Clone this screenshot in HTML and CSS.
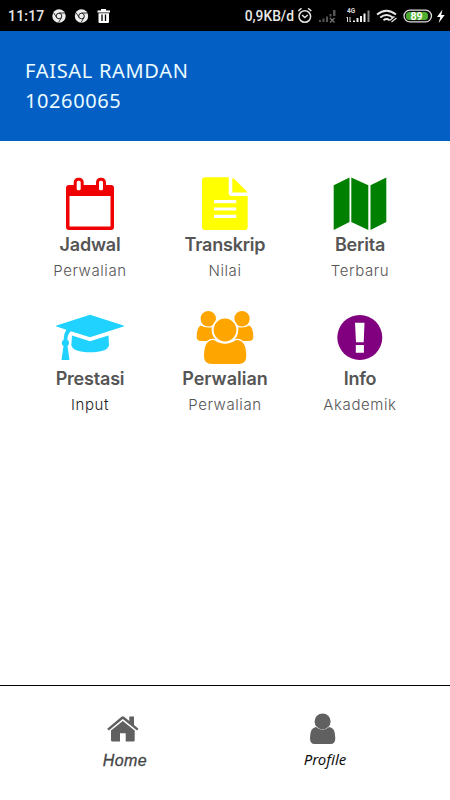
FILE: index.html
```html
<!DOCTYPE html>
<html lang="id">
<head>
    <meta charset="UTF-8">
    <meta name="viewport" content="width=device-width, initial-scale=1.0">
    <title>Home</title>
    <link rel="stylesheet" href="styles.css">
</head>
<body>
    <div class="statusbar">
        <span class="clock">11:17</span>
        <svg class="notif" width="60" height="16" viewBox="0 0 60 16">
            <g id="chrome">
                <circle cx="7" cy="8" r="6.7" fill="#eee"/>
                <circle cx="7" cy="8" r="2.8" fill="#eee" stroke="#222" stroke-width="1"/>
                <path d="M7 5h6M4.500 9.500L1.600 4.600M9.500 9.500L6.600 14.500" stroke="#222" stroke-width=".9"/>
            </g>
            <use href="#chrome" x="22.500"/>
            <path fill="#fff" d="M49 2.500V1h5v1.500H58V4.500H45.500V2.500zM46.500 5.200h10.500V14q0 1-1 1h-8.500q-1 0-1-1z"/>
            <path d="M50 6.500v6.500M53.500 6.500v6.500" stroke="#000" stroke-width="1.300"/>
        </svg>
        <span class="speed">0,9KB/d</span>
        <svg width="148" height="20" viewBox="0 0 148 20">
            <g fill="none" stroke="#e6e6e6" stroke-width="1.500">
                <circle cx="6.800" cy="10.500" r="5.800"/>
                <path d="M4.100 9l2.700 2.600L9.800 9M.3 5l3.200-2.800M13.300 5l-3.200-2.800"/>
            </g>
            <path fill="#555" d="M21 14h2v2h-2zM24.500 12.500h2V16h-2zM28 10.500h2V16h-2zM31.500 8h2v2.500h-2zM35 4h2.500v6H35z"/>
            <path d="M32 12l4.500 4.500M36.500 12L32 16.500" stroke="#777" stroke-width="1.200"/>
            <text class="net" x="49" y="7">4G</text>
            <path d="M49.500 16v-5M52 11v5M48.500 12l1-1M52 16l1-1" stroke="#ddd" fill="none"/>
            <path fill="#f2f2f2" d="M55 14.500h2V16h-2zM58.500 12h2v4h-2zM62 10h2v6h-2zM65.500 7.500h2V16h-2z"/>
            <path fill="#888" d="M69.500 4.500h2V16h-2z"/>
            <g fill="none" stroke="#e8e8e8" stroke-width="1.800">
                <path d="M79 8.500q9.500-7.500 19 0M82.200 11.500q6.300-5 12.600 0M85.500 14.300q3-2.500 6 0"/>
                <path d="M91.500 14.500l5-4M93.500 16l5-4" stroke-width="1.200"/>
            </g>
            <rect x="106" y="4.200" width="27.500" height="11.600" rx="5.800" fill="#111" stroke="#ddd" stroke-width="1.300"/>
            <rect x="108" y="6" width="22" height="8" rx="3.500" fill="#4fae32"/>
            <text class="battery" x="112.500" y="13.800">89</text>
            <path fill="#fff" d="M144.500 3.500L139 11h3.300l-1.600 6 6-8h-3.500z"/>
        </svg>
    </div>

    <header class="header">
        <div class="name">FAISAL RAMDAN</div>
        <div class="nim">10260065</div>
    </header>

    <main class="menu">
        <div class="item">
            <svg class="icon" viewBox="0 0 80 56">
                <path fill="#f00000" fill-rule="evenodd" d="M19 9H61Q64 9 64 12V51Q64 54 61 54H19Q16 54 16 51V12Q16 9 19 9zM19.500 20V50.500H60.500V20z"/>
                <rect x="25.200" y="3.300" width="7" height="12.500" rx="3" fill="#fff" stroke="#f00000" stroke-width="3"/>
                <rect x="47.500" y="3.300" width="7" height="12.500" rx="3" fill="#fff" stroke="#f00000" stroke-width="3"/>
            </svg>
            <h3>Jadwal</h3>
            <p>Perwalian</p>
        </div>
        <div class="item">
            <svg class="icon" viewBox="0 0 80 56">
                <path fill="#ff0" d="M20 1.300H43.700V17Q43.700 20 46.700 20H62.700V51Q62.700 54 59.700 54H20Q17 54 17 51V4.300Q17 1.300 20 1.300z"/>
                <path fill="#ff0" d="M47.300 2Q48.500 2.300 49.500 3.300L61 14.500Q62 15.500 62.300 16.500H47.300z"/>
                <path d="M29 25.700H51.300M29 33H51.300M29 40.300H51.300" stroke="#fff" stroke-width="3.200"/>
            </svg>
            <h3>Transkrip</h3>
            <p>Nilai</p>
        </div>
        <div class="item">
            <svg class="icon" viewBox="0 0 80 56">
                <path fill="#008000" d="M13.700 9.300L29.500 1.500V46L13.700 54zM31.300 1.500L48.300 9.300V54L31.300 46zM50.500 9.300L66.300 1.500V46L50.500 54z"/>
            </svg>
            <h3>Berita</h3>
            <p>Terbaru</p>
        </div>
        <div class="item">
            <svg class="icon" viewBox="0 0 80 56">
                <g fill="#1fd2ff">
                    <path d="M40 4.700L73.500 15.500Q74.500 16 73.500 16.500L40 27.300L21 21.200Q17.500 24 17.300 29.500Q19.300 31 19 33.500Q18.700 35.300 17.500 36L19.500 50H11.500L13.500 36Q11.800 35 11.700 33Q11.700 31 13.600 29.700Q13.700 23.500 16.300 19.700L6.500 16.500Q5.500 16 6.500 15.500z"/>
                    <path d="M22 25.500L40 31.200L58.500 25.500L59 35.500Q57 42.300 40.300 42.300Q23.500 42.300 21.300 35.500z"/>
                </g>
            </svg>
            <h3>Prestasi</h3>
            <p class="dark">Input</p>
        </div>
        <div class="item">
            <svg class="icon" viewBox="0 0 80 56">
                <g fill="#ffa500">
                    <circle cx="23.300" cy="8.700" r="7.700"/>
                    <circle cx="57" cy="8.700" r="7.700"/>
                    <path d="M16 15.500Q20 18.300 26.700 17.300Q26.500 25.500 30.500 29Q25 28 22 31H16Q11.700 31 11.700 27Q11.700 17 16 15.500z"/>
                    <path d="M64 15.500Q60 18.300 53.300 17.300Q53.500 25.500 49.500 29Q55 28 58 31H64Q68.300 31 68.300 27Q68.300 17 64 15.500z"/>
                    <path d="M29 30Q40 37.500 51 30Q61.300 29.500 61.300 46Q61.300 54 53.500 54H27Q19 54 19 46Q19 29.500 29 30z"/>
                    <circle cx="40" cy="20" r="12.300" stroke="#fff" stroke-width="1.800"/>
                </g>
            </svg>
            <h3 class="wide">Perwalian</h3>
            <p>Perwalian</p>
        </div>
        <div class="item">
            <svg class="icon" viewBox="0 0 80 56">
                <circle cx="39.800" cy="27.500" r="22.500" fill="#800080"/>
                <path fill="#fff" d="M35 12.700H44.500L43.700 32.300H36zM35.800 35H43.900V42.700H35.800z"/>
            </svg>
            <h3>Info</h3>
            <p>Akademik</p>
        </div>
    </main>

    <nav class="tabs">
        <div class="tab home">
            <svg width="40" height="36" viewBox="0 0 40 36">
                <g fill="#606060">
                    <path d="M24.300 6.500H29V15L33.500 18.700L32 20.500L17.800 9L3.800 20.500L2.200 18.700L16.500 6.700Q17.800 5.800 19.100 6.700L24.300 11z"/>
                    <path d="M17.800 11L29.700 20.500V30.200Q29.700 31.500 28.400 31.500H20.700V23.300H15V31.500H7.400Q6 31.500 6 30.200V20.500z"/>
                </g>
            </svg>
            <span>Home</span>
        </div>
        <div class="tab profile">
            <svg width="40" height="36" viewBox="0 0 40 36">
                <g fill="#606060">
                    <path d="M11 17Q17.600 22.500 24.200 17Q30.300 17.500 30.300 28Q30.300 34 25.500 34H9.700Q5 34 5 28Q5 17.500 11 17z"/>
                    <circle cx="17.600" cy="11.400" r="8"/>
                </g>
            </svg>
            <span>Profile</span>
        </div>
    </nav>
</body>
</html>
```
FILE: styles.css
```css
* {
    box-sizing: border-box;
}
body {
    margin: 0;
    height: 800px;
    display: flex;
    flex-direction: column;
    background: #fff;
    font-family: Inter, "Liberation Sans", sans-serif;
    overflow: hidden;
}
.statusbar {
    height: 31px;
    display: flex;
    align-items: center;
    padding: 0 4px 0 8px;
    background: #000;
    color: #e8e8e8;
    font-family: Roboto, sans-serif;
}
.clock {
    width: 44px;
    font-size: 14px;
    font-weight: 500;
    letter-spacing: 0.2px;
}
.speed {
    margin-left: auto;
    margin-right: 4px;
    font-size: 13.8px;
    font-weight: 500;
}
.net {
    font: bold 6.5px Roboto, sans-serif;
    fill: #ddd;
}
.battery {
    font: bold 10.5px Roboto, sans-serif;
    fill: #fff;
}
.header {
    height: 110px;
    padding: 25px;
    background: #045fc5;
    color: #e9fbff;
    font-family: "Noto Sans", sans-serif;
    font-size: 20px;
    line-height: 30px;
    white-space: nowrap;
}
.name {
    letter-spacing: 0.7px;
}
.nim {
    letter-spacing: 0.6px;
}
.menu {
    flex: 1;
    display: grid;
    grid-template-columns: repeat(3, 135px);
    grid-auto-rows: 134px;
    justify-content: center;
    padding-top: 35px;
}
.item {
    display: flex;
    flex-direction: column;
    align-items: center;
    color: #555;
}
.icon {
    width: 80px;
    height: 56px;
}
.item h3 {
    margin: 0;
    font-size: 18px;
    font-weight: 600;
    line-height: 26px;
    letter-spacing: -0.2px;
}
.item .wide {
    letter-spacing: 0;
}
.item p {
    margin: 0;
    font-size: 15px;
    font-weight: 300;
    line-height: 26px;
    letter-spacing: 0.6px;
}
.item .dark {
    color: #222;
}
.tabs {
    height: 115px;
    display: flex;
    justify-content: center;
    padding-top: 24px;
    border-top: 1px solid #000;
}
.tab {
    width: 200px;
    display: flex;
    flex-direction: column;
    align-items: center;
    font-size: 15px;
    font-style: italic;
    line-height: 30px;
}
.home {
    color: #444;
    font-family: "Liberation Sans", sans-serif;
    font-size: 16px;
    letter-spacing: 0.4px;
    -webkit-text-stroke: 0.3px #444;
}
.profile {
    color: #111;
    font-family: "Noto Sans", sans-serif;
    line-height: 27px;
}
```
